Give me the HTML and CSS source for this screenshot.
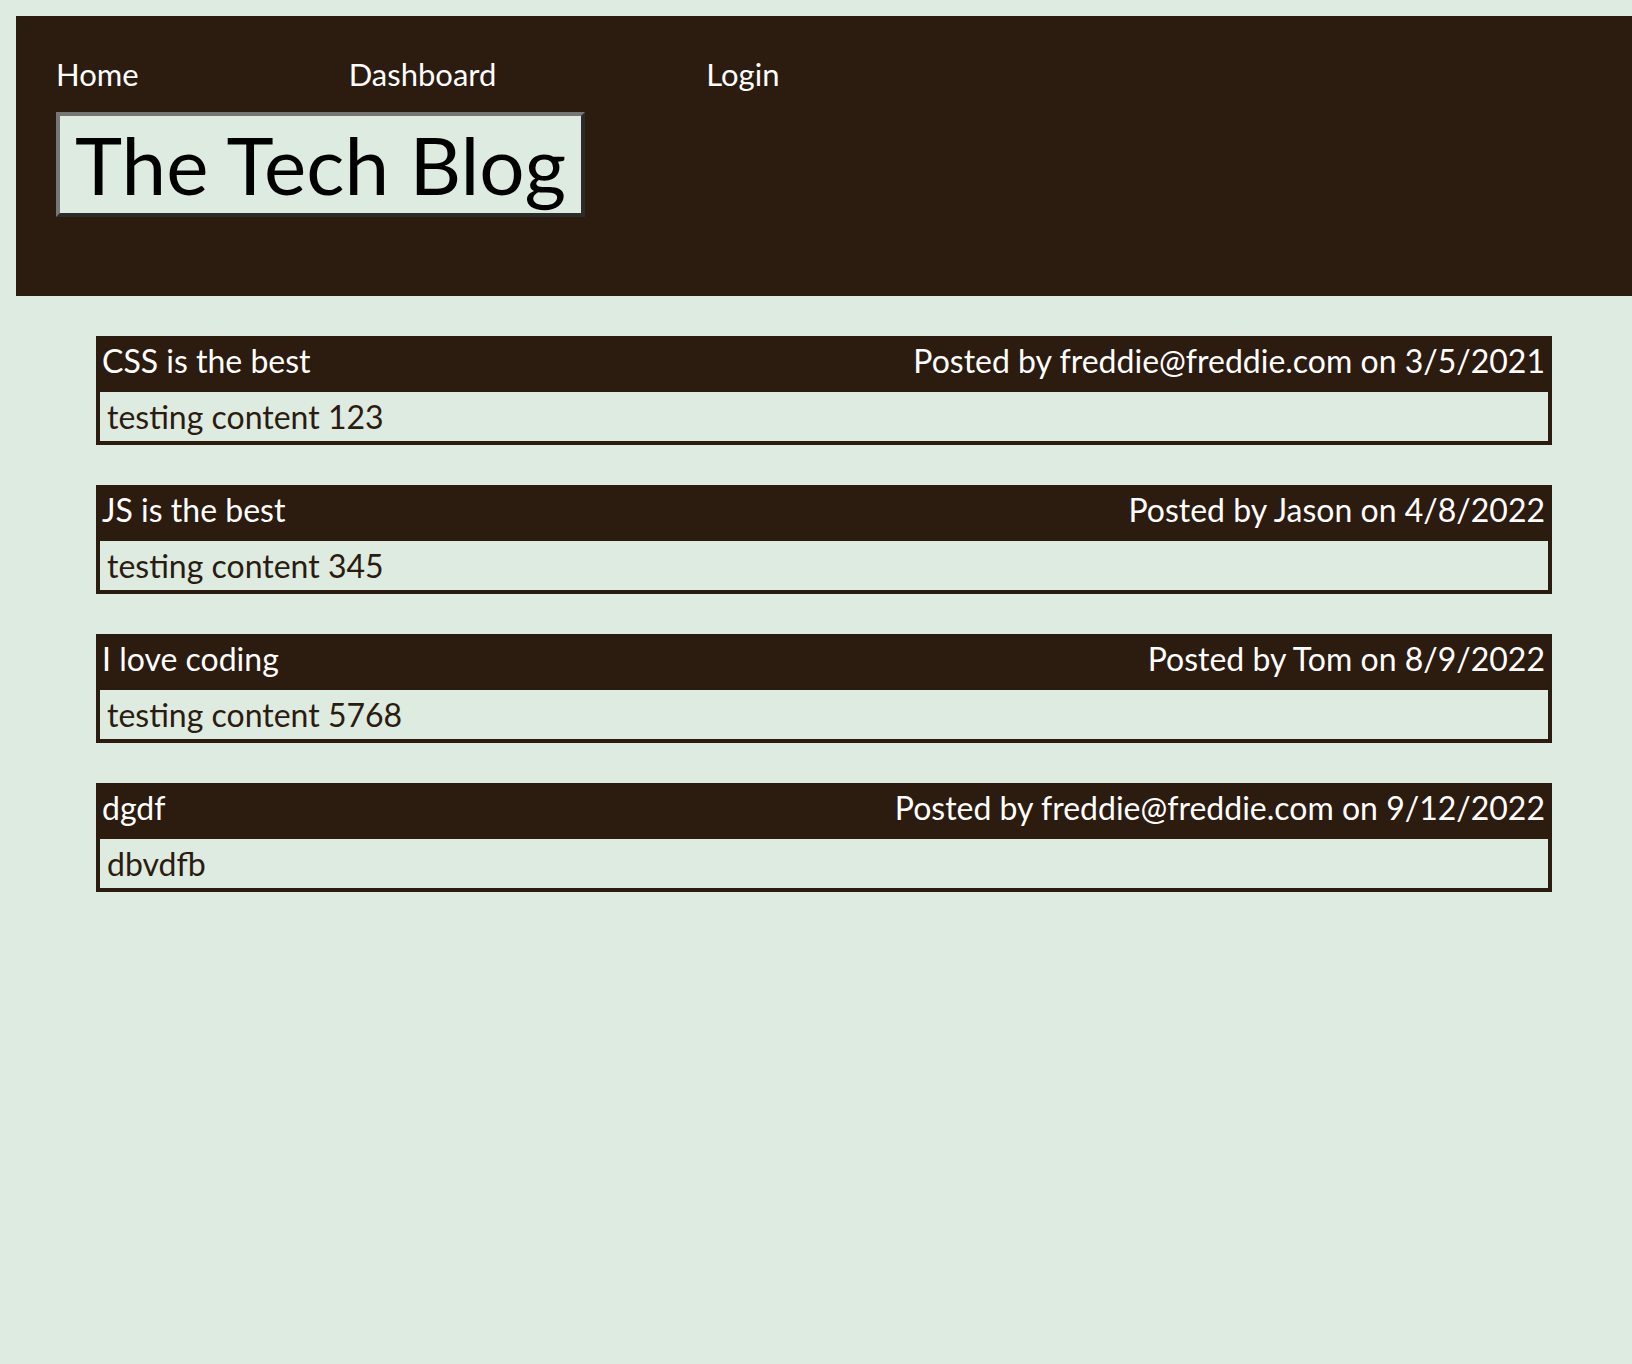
FILE: index.html
```html
<!DOCTYPE html>
<html lang="en">
<head>
<meta charset="utf-8">
<title>The Tech Blog</title>
<link rel="stylesheet" href="styles.css">
</head>
<body>
<header class="site-header">
  <nav class="nav">
    <a class="nav-link" href="#">Home</a>
    <a class="nav-link" href="#">Dashboard</a>
    <a class="nav-link" href="#">Login</a>
  </nav>
  <h1 class="site-title">The Tech Blog</h1>
</header>
<main class="posts">
  <article class="post">
    <div class="post-head"><span class="post-title">CSS is the best</span><span class="post-meta">Posted by freddie@freddie.com on 3/5/2021</span></div>
    <div class="post-body">testing content 123</div>
  </article>
  <article class="post">
    <div class="post-head"><span class="post-title">JS is the best</span><span class="post-meta">Posted by Jason on 4/8/2022</span></div>
    <div class="post-body">testing content 345</div>
  </article>
  <article class="post">
    <div class="post-head"><span class="post-title">I love coding</span><span class="post-meta">Posted by Tom on 8/9/2022</span></div>
    <div class="post-body">testing content 5768</div>
  </article>
  <article class="post">
    <div class="post-head"><span class="post-title">dgdf</span><span class="post-meta">Posted by freddie@freddie.com on 9/12/2022</span></div>
    <div class="post-body">dbvdfb</div>
  </article>
</main>
</body>
</html>
```
FILE: styles.css
```css
html, body {
  margin: 0;
  padding: 0;
}
body {
  background: #ddebe0;
  font-family: Lato, "Open Sans", sans-serif;
  color: #2c1b0f;
  overflow-x: hidden;
}
.site-header {
  background: #2c1b0f;
  margin: 16px 0 0 16px;
  height: 280px;
  box-sizing: border-box;
  padding: 40px 0 0 40px;
}
.nav {
  display: flex;
  gap: 210px;
  font-size: 31px;
  line-height: 36px;
}
.nav-link {
  color: #ffffff;
  text-decoration: none;
}
.site-title {
  display: inline-block;
  margin: 20px 0 0 0;
  padding: 0 15px 0 15px;
  background: #ddebe0;
  color: #000;
  font-weight: normal;
  font-size: 80px;
  line-height: 97px;
  border-style: solid;
  border-width: 4px;
  border-color: #767676 #2b2b2b #2b2b2b #767676;
}
.posts {
  display: flex;
  flex-direction: column;
  gap: 40px;
  margin: 40px 80px 0 96px;
}
.post {
  background: #2c1b0f;
}
.post-head {
  display: flex;
  justify-content: space-between;
  color: #ffffff;
  font-size: 32px;
  line-height: 50px;
  padding: 0 7px 6px 6px;
}
.post-body {
  margin: 0 4px 4px 4px;
  background: #ddebe0;
  font-size: 32px;
  line-height: 49px;
  padding: 0 8px 0 7px;
}
```
